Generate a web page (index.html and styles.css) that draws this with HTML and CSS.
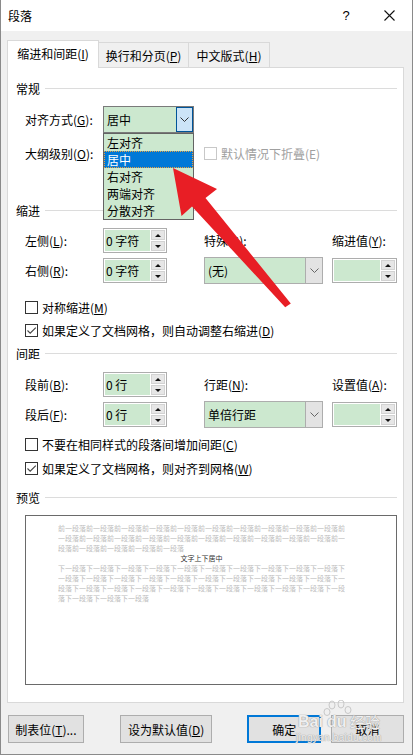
FILE: index.html
```html
<!DOCTYPE html>
<html lang="zh">
<head>
<meta charset="utf-8">
<title>段落</title>
<link rel="stylesheet" href="styles.css">
</head>
<body>
<div class="dialog">
  <div class="titlebar">
    <span class="title">段落</span>
    <span class="help">?</span>
    <span class="close"><svg width="11" height="11" viewBox="0 0 11 11"><path d="M0.5 0.5L10.5 10.5M10.5 0.5L0.5 10.5" stroke="#111" stroke-width="1.1" fill="none"/></svg></span>
  </div>
  <div class="body">
    <div class="tabs">
      <div class="tab active">缩进和间距(<u>I</u>)</div>
      <div class="tab t2">换行和分页(<u>P</u>)</div>
      <div class="tab t3">中文版式(<u>H</u>)</div>
    </div>
    <div class="panel">
      <div class="group-title g1"><span>常规</span><i class="rule"></i></div>

      <div class="row r-align">
        <span class="label">对齐方式(<u>G</u>):</span>
        <div class="combo focused">
          <span class="combo-text">居中</span>
          <span class="combo-btn"><svg width="9" height="5" viewBox="0 0 9 5"><path d="M0.5 0.5L4.5 4.5L8.5 0.5" stroke="#333" fill="none"/></svg></span>
          <div class="droplist">
            <div class="item">左对齐</div>
            <div class="item selected">居中</div>
            <div class="item">右对齐</div>
            <div class="item">两端对齐</div>
            <div class="item">分散对齐</div>
          </div>
        </div>
      </div>

      <div class="row r-outline">
        <span class="label">大纲级别(<u>O</u>):</span>
        <span class="spacer"></span>
        <span class="checkbox disabled"></span>
        <span class="check-label disabled-text">默认情况下折叠(E)</span>
      </div>

      <div class="group-title g2"><span>缩进</span><i class="rule"></i></div>

      <div class="grid g-indent">
        <span class="label">左侧(<u>L</u>):</span>
        <div class="spin"><span class="spin-text">0 字符</span><span class="spin-btns"><span class="sb up"></span><span class="sb down"></span></span></div>
        <span class="label">特殊(<u>S</u>):</span>
        <span class="label">缩进值(<u>Y</u>):</span>

        <span class="label">右侧(<u>R</u>):</span>
        <div class="spin"><span class="spin-text">0 字符</span><span class="spin-btns"><span class="sb up"></span><span class="sb down"></span></span></div>
        <div class="combo wide"><span class="combo-text">(无)</span><span class="combo-btn"><svg width="9" height="5" viewBox="0 0 9 5"><path d="M0.5 0.5L4.5 4.5L8.5 0.5" stroke="#666" fill="none"/></svg></span></div>
        <div class="spin"><span class="spin-text"></span><span class="spin-btns"><span class="sb up"></span><span class="sb down"></span></span></div>
      </div>

      <div class="row check c1">
        <span class="checkbox"></span>
        <span class="check-label">对称缩进(<u>M</u>)</span>
      </div>
      <div class="row check c2">
        <span class="checkbox checked"><svg width="11" height="11" viewBox="0 0 11 11"><path d="M1.5 5.5L4.2 8.2L9.8 2.6" stroke="#444" stroke-width="1.1" fill="none"/></svg></span>
        <span class="check-label">如果定义了文档网格，则自动调整右缩进(<u>D</u>)</span>
      </div>

      <div class="group-title g3"><span>间距</span><i class="rule"></i></div>

      <div class="grid g-spacing">
        <span class="label">段前(<u>B</u>):</span>
        <div class="spin"><span class="spin-text">0 行</span><span class="spin-btns"><span class="sb up"></span><span class="sb down"></span></span></div>
        <span class="label">行距(<u>N</u>):</span>
        <span class="label">设置值(<u>A</u>):</span>

        <span class="label">段后(<u>F</u>):</span>
        <div class="spin"><span class="spin-text">0 行</span><span class="spin-btns"><span class="sb up"></span><span class="sb down"></span></span></div>
        <div class="combo wide"><span class="combo-text">单倍行距</span><span class="combo-btn"><svg width="9" height="5" viewBox="0 0 9 5"><path d="M0.5 0.5L4.5 4.5L8.5 0.5" stroke="#666" fill="none"/></svg></span></div>
        <div class="spin"><span class="spin-text"></span><span class="spin-btns"><span class="sb up"></span><span class="sb down"></span></span></div>
      </div>

      <div class="row check c3">
        <span class="checkbox"></span>
        <span class="check-label">不要在相同样式的段落间增加间距(<u>C</u>)</span>
      </div>
      <div class="row check c4">
        <span class="checkbox checked"><svg width="11" height="11" viewBox="0 0 11 11"><path d="M1.5 5.5L4.2 8.2L9.8 2.6" stroke="#444" stroke-width="1.1" fill="none"/></svg></span>
        <span class="check-label">如果定义了文档网格，则对齐到网格(<u>W</u>)</span>
      </div>

      <div class="group-title g4"><span>预览</span><i class="rule"></i></div>

      <div class="preview">
        <div class="pv-text">
          <div class="pv-line">前一段落前一段落前一段落前一段落前一段落前一段落前一段落前一段落前一段落前一段落前</div>
          <div class="pv-line">一段落前一段落前一段落前一段落前一段落前一段落前一段落前一段落前一段落前一段落前一</div>
          <div class="pv-line">段落前一段落前一段落前一段落前一段落</div>
          <div class="pv-line pv-main">文字上下居中</div>
          <div class="pv-line">下一段落下一段落下一段落下一段落下一段落下一段落下一段落下一段落下一段落下一段落下</div>
          <div class="pv-line">一段落下一段落下一段落下一段落下一段落下一段落下一段落下一段落下一段落下一段落下一</div>
          <div class="pv-line">段落下一段落下一段落下一段落下一段落下一段落下一段落下一段落下一段落下一段落下一段</div>
          <div class="pv-line">落下一段落下一段落下一段落</div>
        </div>
      </div>
    </div>

    <div class="buttons">
      <button class="btn b1">制表位(<u>T</u>)...</button>
      <button class="btn b2">设为默认值(<u>D</u>)</button>
      <button class="btn b3 default">确定</button>
      <button class="btn b4">取消</button>
    </div>
  </div>

  <div class="watermark">
    <span class="wm-paw"><svg width="30" height="26" viewBox="0 0 30 26"><g fill="none" stroke="#c8c8c8" stroke-width="1"><ellipse cx="9" cy="5" rx="3" ry="4"/><ellipse cx="18" cy="4" rx="3" ry="4"/><ellipse cx="25" cy="10" rx="3" ry="3.5"/><ellipse cx="4" cy="12" rx="3" ry="3.5"/></g></svg></span>
    <span class="wm-bai">Bai</span><span class="wm-du">du</span><span class="wm-jy">经验</span>
    <div class="wm-url">jingyan.baidu.com</div>
  </div>

  <svg class="arrow" width="413" height="755" viewBox="0 0 413 755">
    <polygon points="173,168 217,189 205.5,198 290.8,303.5 285.2,307.3 192,206.5 181.5,216" fill="#e81e25"/>
  </svg>
</div>
</body>
</html>
```

FILE: styles.css
```css
* { box-sizing: border-box; }
html, body { margin: 0; padding: 0; }
body {
  width: 413px;
  height: 755px;
  background: #fff;
  font-family: "Noto Sans CJK SC", "Noto Sans", sans-serif;
  font-size: 12px;
  color: #000;
}
u { text-decoration: underline; text-underline-offset: 1px; }

.dialog {
  position: relative;
  width: 413px;
  height: 755px;
  border-left: 1px solid #8a8a8a;
  border-right: 1px solid #8a8a8a;
  border-bottom: 1px solid #8a8a8a;
  display: flex;
  flex-direction: column;
  overflow: hidden;
}

.titlebar {
  flex: none;
  height: 31px;
  background: #fff;
  display: flex;
  align-items: center;
  padding-left: 7px;
  padding-right: 17px;
}
.title { flex: 1; font-size: 12px; line-height: 16px; }
.help {
  width: 10px;
  text-align: center;
  font-family: "Liberation Sans", sans-serif;
  font-size: 13px;
  margin-right: 33px;
  line-height: 14px;
}
.close { width: 11px; height: 11px; display: flex; }

.body {
  flex: 1;
  background: #f0f0f0;
  padding: 9px 8px 0 6px;
  display: flex;
  flex-direction: column;
}

.tabs {
  height: 28px;
  display: flex;
  align-items: flex-start;
  position: relative;
  z-index: 2;
}
.tab {
  height: 25px;
  margin-top: 2px;
  border: 1px solid #d9d9d9;
  border-bottom: none;
  background: #f0f0f0;
  display: flex;
  align-items: center;
  justify-content: center;
  font-size: 12px;
  padding-top: 1px;
}
.tab.active {
  height: 28px;
  margin-top: 0;
  width: 92px;
  background: #fff;
  position: relative;
  z-index: 3;
  padding-top: 0;
  padding-bottom: 2px;
}
.tab.t2 { width: 91px; margin-left: -1px; }
.tab.t3 { width: 82px; margin-left: -1px; }

.panel {
  position: relative;
  z-index: 1;
  margin-top: -1px;
  height: 636px;
  background: #fff;
  border: 1px solid #d9d9d9;
  padding: 0 6px 0 8px;
  display: flex;
  flex-direction: column;
}

.group-title {
  height: 16px;
  display: flex;
  align-items: center;
  font-size: 12px;
}
.group-title .rule {
  flex: 1;
  height: 1px;
  background: #dcdcdc;
  margin-left: 5px;
}
.g1 { margin-top: 12px; }
.g2 { margin-top: 37px; }
.g3 { margin-top: 7px; }
.g4 { margin-top: 13px; }

.row {
  display: flex;
  align-items: center;
  padding-left: 9px;
}
.label { width: 78px; white-space: nowrap; }
.grid .label { width: auto; }
.spacer { width: 101px; }

.r-align { margin-top: 10px; height: 27px; position: relative; z-index: 5; }
.r-outline { margin-top: 8px; height: 24px; }

.combo {
  position: relative;
  height: 27px;
  border: 1px solid #adadad;
  background: #cce8cf;
  display: flex;
  align-items: stretch;
}
.combo.focused { width: 91px; border-color: #7a7a7a; }
.combo.wide { width: 119px; }
.combo-text {
  flex: 1;
  display: flex;
  align-items: center;
  padding-left: 3px;
}
.combo-btn {
  width: 17px;
  display: flex;
  align-items: center;
  justify-content: center;
  background: #e3e3e3;
  border-left: 1px solid #adadad;
}
.combo.focused .combo-btn {
  background: #cce4f7;
  border: 1px solid #005499;
}

.droplist {
  position: absolute;
  top: calc(100% + 1px);
  left: -1px;
  width: 91px;
  border: 1px solid #646464;
  background: #cce8cf;
  padding: 0;
}
.droplist .item {
  height: 17px;
  line-height: 17px;
  padding-left: 3px;
  white-space: nowrap;
}
.droplist .item.selected {
  background: #0078d7;
  color: #fff;
  outline: 1px dotted #e8a040;
  outline-offset: -1px;
}

.checkbox {
  width: 13px;
  height: 13px;
  border: 1px solid #333;
  background: #fff;
  flex: none;
  display: flex;
  align-items: center;
  justify-content: center;
}
.checkbox.disabled { border-color: #c8c8c8; }
.check-label { margin-left: 4px; white-space: nowrap; }
.disabled-text { color: #a0a0a0; }
.check { height: 16px; }
.c1 { margin-top: 15px; }
.c2 { margin-top: 7px; }
.c3 { margin-top: 8px; }
.c4 { margin-top: 8px; }

.grid {
  display: grid;
  grid-template-columns: 78px 101px 128px 65px;
  grid-template-rows: 25px 27px;
  row-gap: 4px;
  align-items: center;
  padding-left: 9px;
}
.g-indent { margin-top: 10px; }
.g-spacing { margin-top: 11px; }

.spin {
  width: 64px;
  height: 25px;
  border: 1px solid #adadad;
  background: #fff;
  padding: 1px;
  display: flex;
  gap: 1px;
}
.grid .spin:last-child { width: 65px; }
.spin-text {
  flex: 1;
  background: #cce8cf;
  display: flex;
  align-items: center;
  padding-left: 1px;
  white-space: nowrap;
}
.spin-btns {
  width: 14px;
  display: flex;
  flex-direction: column;
  gap: 1px;
}
.sb {
  flex: 1;
  background: #e6e6e6;
  border: 1px solid #d2d2d2;
  display: flex;
  align-items: center;
  justify-content: center;
}
.sb::after {
  content: "";
  width: 0;
  height: 0;
  border-left: 3px solid transparent;
  border-right: 3px solid transparent;
}
.sb.up::after { border-bottom: 3px solid #111; }
.sb.down::after { border-top: 3px solid #111; }

.preview {
  margin-top: 10px;
  margin-left: 9px;
  width: 372px;
  height: 170px;
  border: 1px solid #6a6a6a;
  background: #fff;
  padding: 7px 0 0 32px;
}
.pv-text { width: 287px; }
.pv-line {
  font-size: 7px;
  line-height: 10px;
  height: 10px;
  color: #bdbdbd;
  white-space: nowrap;
  overflow: hidden;
}
.pv-line.pv-main { color: #333; text-align: center; }

.buttons {
  margin-top: 12px;
  display: flex;
  height: 28px;
  padding-left: 1px;
}
.btn {
  height: 28px;
  background: #e1e1e1;
  border: 1px solid #adadad;
  font-family: "Noto Sans CJK SC", "Noto Sans", sans-serif;
  font-size: 12px;
  color: #000;
  padding: 0;
  margin: 0;
  display: flex;
  align-items: center;
  justify-content: center;
}
.b1 { width: 76px; }
.b2 { width: 93px; margin-left: 36px; }
.b3 { width: 74px; margin-left: 35px; }
.b4 { width: 73px; margin-left: 10px; }
.btn.default { border: 2px solid #0078d7; }

.watermark {
  position: absolute;
  left: 295px;
  top: 700px;
  width: 100px;
  height: 45px;
  z-index: 8;
  pointer-events: none;
  color: rgba(255, 255, 255, 0.85);
  font-family: "Liberation Sans", sans-serif;
  text-shadow: 0 0 1px #9a9a9a, 0 0 1px #9a9a9a;
}
.wm-paw { position: absolute; left: 27px; top: 0; line-height: 0; }
.wm-bai { position: absolute; left: 2px; top: 14px; font-size: 16px; line-height: 16px; font-weight: bold; }
.wm-du { position: absolute; left: 31px; top: 14px; font-size: 16px; line-height: 16px; font-weight: bold; }
.wm-jy { position: absolute; left: 54px; top: 13px; font-size: 15px; line-height: 17px; font-family: "Noto Sans CJK SC", sans-serif; }
.wm-url { position: absolute; left: 0; top: 32px; font-size: 10px; line-height: 11px; letter-spacing: 0.3px; }

.arrow {
  position: absolute;
  left: -1px;
  top: 0;
  z-index: 10;
  pointer-events: none;
}
```
